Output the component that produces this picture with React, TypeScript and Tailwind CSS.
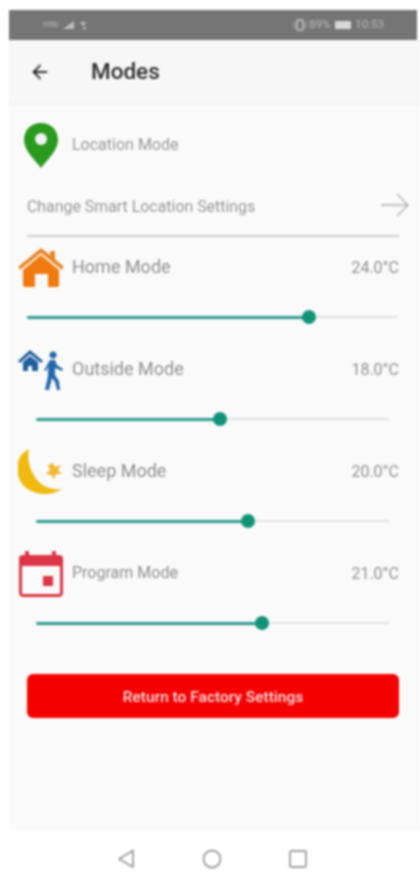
import React from "react";
import { ArrowLeft } from "lucide-react";

interface ModeRowProps {
  icon: React.ReactNode;
  label: string;
  temp: string;
  percent: number;
  small?: boolean;
  inset?: boolean;
}

const HomeIcon = () => (
  <svg width="46" height="42" viewBox="0 0 46 42">
    <path d="M23 1 L32 8 V4 H37 V12 L45.5 19.5 L44 23 L23 6 L2 23 L0.5 19.5 Z" fill="#e8872a" />
    <path d="M23 8 L41 23 V38 Q41 40 39 40 H30 V27 H17 V40 H7 Q5 40 5 38 V23 Z" fill="#f07a10" />
  </svg>
);

const OutsideIcon = () => (
  <svg width="46" height="42" viewBox="0 0 46 42">
    <path d="M12 1 L25 12 L23 14 L12 5 L2 14 L0 12 Z" fill="#1f5f9c" />
    <path d="M5 13 L12 7 L20 13 V22 H14 V17 H10 V22 H5 Z" fill="#1f5f9c" />
    <circle cx="35" cy="6" r="3.5" fill="#2469ab" />
    <path d="M32 11 H37 L39 16 L45 20 L44 22 L37 19 L37 26 L41 32 L42 41 H39 L37 33 L34 29 L31 41 H27 L30 27 L30 17 L28 22 L26 21 Z" fill="#2469ab" />
  </svg>
);

const SleepIcon = () => (
  <svg width="46" height="46" viewBox="0 0 46 46">
    <path d="M11 0 C-4 7 -4 28 7 38 C17 47 35 47 43 40 C30 41 22 36 17 28 C11 19 9 9 11 0 Z" fill="#efb90f" />
    <path d="M35 14 L37 18 L43 16 L40 21 L44 25 L38 25 L36 30 L33 26 L28 25 L32 21 L30 16 Z" fill="#f2b632" />
  </svg>
);

const ProgramIcon = () => (
  <svg width="46" height="46" viewBox="0 0 46 46">
    <path d="M7 0 H11 V4 H34 V0 H38 V4 H41 Q45 4 45 8 V41 Q45 46 41 46 H5 Q1 46 1 41 V8 Q1 4 5 4 H7 Z" fill="#dc3545" />
    <rect x="4" y="15" width="38" height="28" rx="1" fill="#fafafa" />
    <rect x="25" y="25" width="10" height="10" fill="#dc3545" />
  </svg>
);

function ModeRow({ icon, label, temp, percent, small, inset }: ModeRowProps) {
  return (
    <div className="h-[102px] flex flex-col">
      <div className="h-[42px] flex items-center pl-[9px] pr-[21px]">
        <div className="w-[46px] h-[42px] flex items-center justify-center shrink-0">{icon}</div>
        <span className={`ml-[8px] mb-[3px] flex-1 text-[#8f8f8f] ${small ? "text-[16px]" : "text-[18px]"}`}>{label}</span>
        <span className="mb-[1px] text-[16px] text-[#8f8f8f]">{temp}</span>
      </div>
      <div className={`mt-[21px] ${inset ? "ml-[27px] mr-[31px]" : "ml-[18px] mr-[22px]"} h-[14px] relative flex items-center`}>
        <div className="h-[3px] bg-[#2e9a8c] rounded-full" style={{ width: `${percent}%` }} />
        <div className="h-[2px] flex-1 bg-[#e2e2e2]" />
        <div
          className="absolute w-[14px] h-[14px] rounded-full bg-[#0f9478] -translate-x-1/2"
          style={{ left: `${percent}%` }}
        />
      </div>
    </div>
  );
}

export default function App() {
  return (
    <div className="w-[420px] h-[887px] bg-white flex flex-col font-['Roboto',sans-serif] overflow-hidden blur-[0.8px]">
      {/* status bar */}
      <div className="h-[10px] shrink-0" />
      <div className="h-[30px] ml-[9px] mr-[3px] bg-[#757575] flex items-center justify-between pl-[34px] pr-[33px] text-[#bcbcbc] shrink-0">
        <div className="flex items-center gap-[5px]">
          <span className="text-[9px]">mts</span>
          <svg width="30" height="10" viewBox="0 0 30 10">
            <path d="M0 9 L11 1 V9 Z" fill="#bcbcbc" />
            <path d="M17 2 H24 L20 6 Z M20 7 H23 V9 H20 Z" fill="#bcbcbc" />
          </svg>
        </div>
        <div className="flex items-center gap-[2px] text-[11.5px]">
          <svg width="14" height="12" viewBox="0 0 14 12">
            <rect x="4" y="1" width="6" height="10" rx="1" fill="none" stroke="#c8c8c8" strokeWidth="1.6" />
            <path d="M1 3 V9 M13 3 V9" stroke="#bcbcbc" />
          </svg>
          <span>89%</span>
          <span className="ml-[3px] w-[16px] h-[8px] bg-[#d8d8d8] rounded-[1px]" />
          <span className="ml-[2px]">10:53</span>
        </div>
      </div>

      {/* header */}
      <div className="h-[65px] ml-[9px] bg-[#f7f7f7] flex items-center shrink-0 border-b border-[#f0f0f0]">
        <ArrowLeft size={22} strokeWidth={2} className="ml-[20px] text-[#2b2b2b]" />
        <span className="ml-[40px] text-[22.5px] font-medium text-[#2e2e2e]">Modes</span>
      </div>

      {/* content */}
      <div className="flex-1 bg-[#fafafa] flex flex-col ml-[9px]">
        <div className="h-[76px] pt-[4px] pl-[15px] flex items-center">
          <svg width="34" height="45" viewBox="0 0 34 45">
            <path d="M17 0 C7 0 0 7 0 17 C0 27 10 36 17 45 C24 36 34 27 34 17 C34 7 27 0 17 0 Z" fill="#2a9a1e" />
            <circle cx="17" cy="16" r="6" fill="#f2f2f2" />
          </svg>
          <span className="ml-[14px] text-[16px] text-[#989898]">Location Mode</span>
        </div>
        <div className="h-[44px] pl-[18px] pr-[11px] pt-[4px] flex items-center justify-between">
          <span className="text-[15.9px] mt-[3px] text-[#989898]">Change Smart Location Settings</span>
          <svg width="28" height="24" viewBox="0 0 28 24" fill="none" stroke="#adadad" strokeWidth="1.3">
            <path d="M0 12 H27 M16 1 L27 12 L16 23" />
          </svg>
        </div>
        <div className="mt-[10px] h-[2px] ml-[18px] mr-[21px] bg-[#cfcfcf]" />
        <div className="pt-[10px]">
          <ModeRow icon={<HomeIcon />} label="Home Mode" temp="24.0°C" percent={76} />
          <ModeRow icon={<OutsideIcon />} label="Outside Mode" temp="18.0°C" percent={52} inset />
          <ModeRow icon={<SleepIcon />} label="Sleep Mode" temp="20.0°C" percent={60} inset />
          <ModeRow icon={<ProgramIcon />} label="Program Mode" temp="21.0°C" percent={64} small inset />
        </div>
        <button className="mt-[19px] ml-[18px] mr-[21px] h-[44px] pt-[3px] bg-[#f50000] rounded-[6px] text-[15.5px] font-medium text-[#f9dede]">
          Return to Factory Settings
        </button>
      </div>

      {/* nav bar */}
      <div className="h-[57px] bg-white flex items-center shrink-0 pl-[117px] gap-[67px]">
        <svg width="18" height="20" viewBox="0 0 18 20" fill="none" stroke="#9b9b9b" strokeWidth="1.8" strokeLinejoin="round">
          <path d="M16 1.5 V18 L2 10 Z" />
        </svg>
        <svg width="20" height="20" viewBox="0 0 20 20" fill="none" stroke="#9b9b9b" strokeWidth="1.8">
          <circle cx="10" cy="10" r="8.5" />
        </svg>
        <svg width="18" height="18" viewBox="0 0 18 18" fill="none" stroke="#9b9b9b" strokeWidth="1.8">
          <rect x="1" y="1" width="16" height="16" rx="1.5" />
        </svg>
      </div>
    </div>
  );
}
